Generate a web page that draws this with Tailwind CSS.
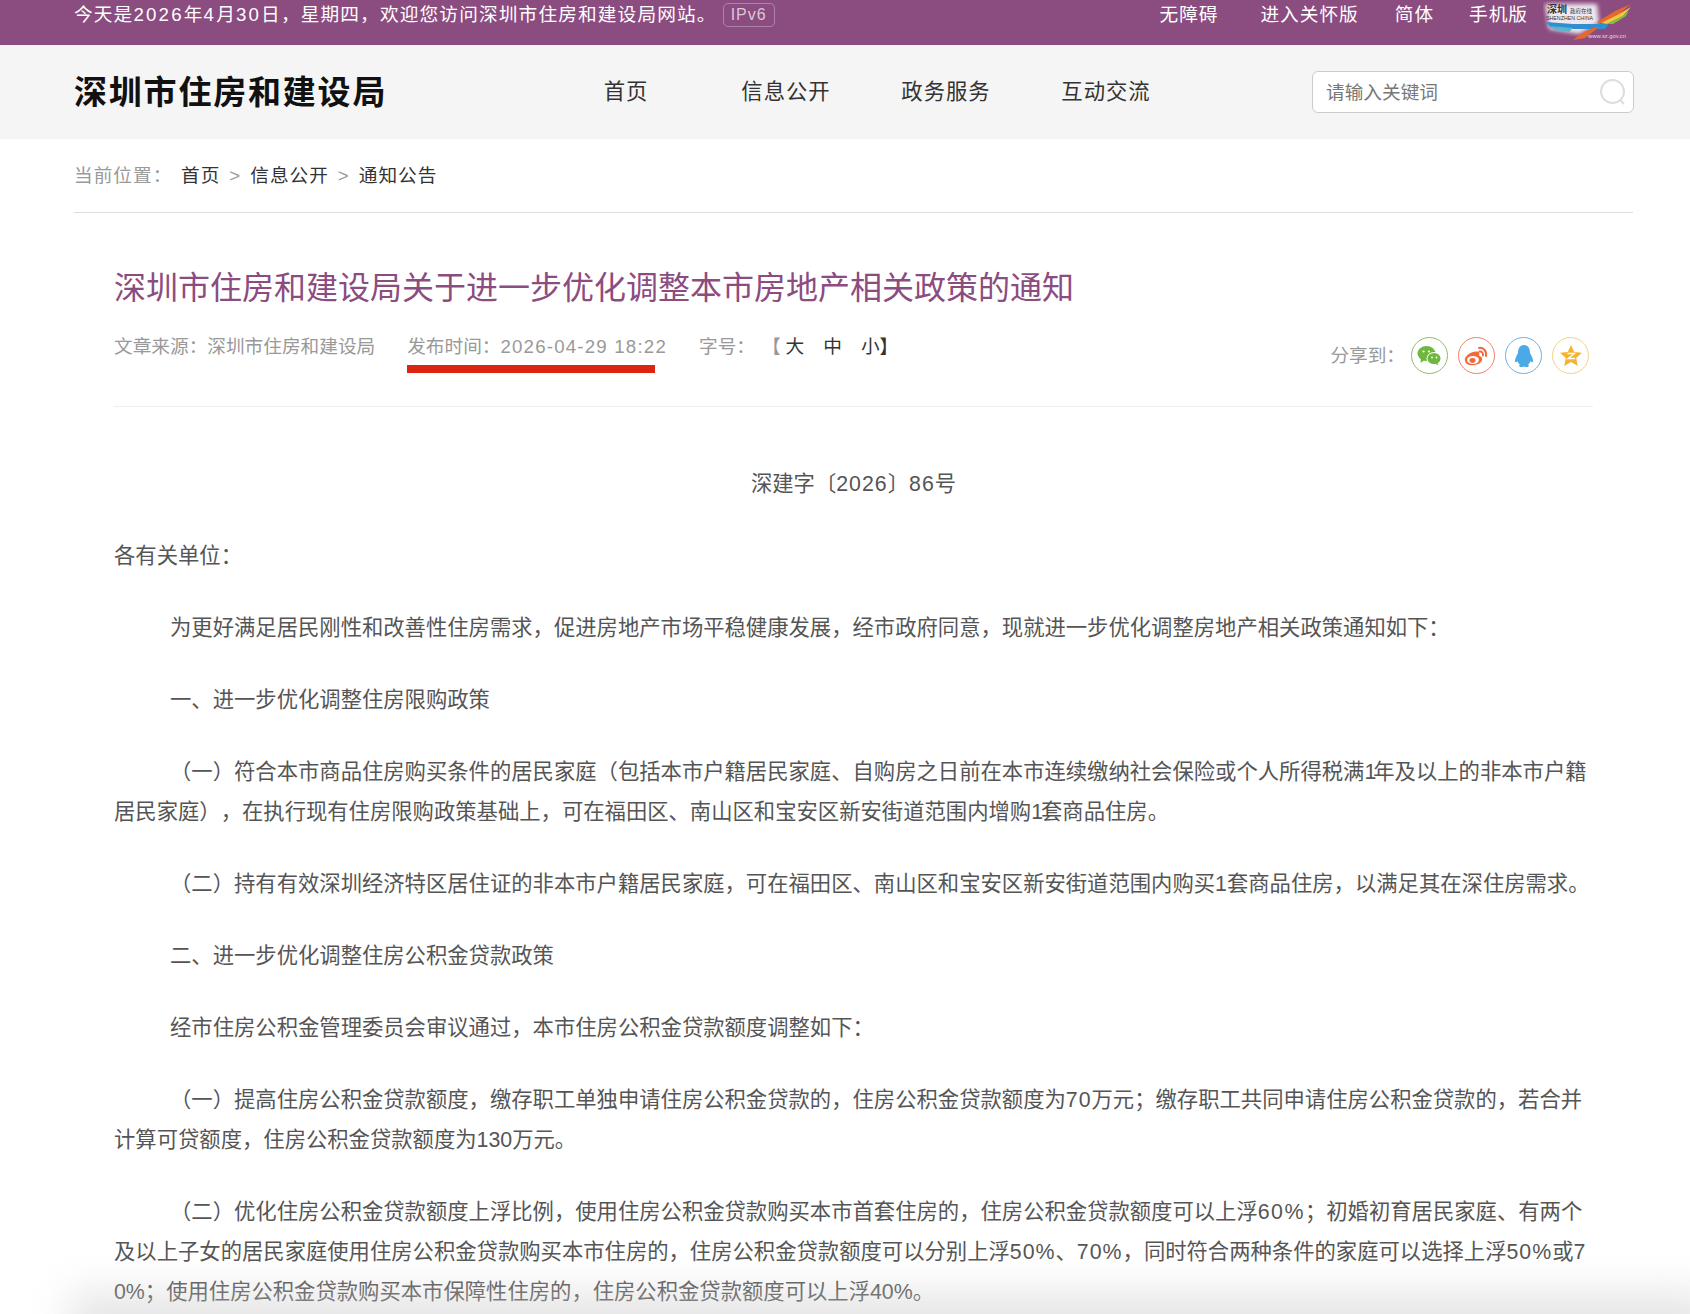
<!DOCTYPE html>
<html lang="zh-CN">
  <head>
    <meta charset="UTF-8" />
    <title>深圳市住房和建设局关于进一步优化调整本市房地产相关政策的通知</title>
    <script src="https://cdn.jsdelivr.net/npm/@tailwindcss/browser@4"></script>
  </head>
  <body class="relative h-[1314px] overflow-hidden bg-white font-['Liberation_Sans','Noto_Sans_CJK_SC',sans-serif] text-[#555] [text-spacing-trim:space-all]">

    <!-- top bar -->
    <div class="flex h-[45px] items-start justify-between bg-[#8b4c7f] pl-[74px] pr-[57px] text-[18.67px] leading-[30px] tracking-[1px] text-white">
      <div class="flex items-start">
        <span class="tracking-[1.15px]">今天是<span class="tracking-[2.2px]">2026</span>年<span class="tracking-[2.2px]">4</span>月<span class="tracking-[2.2px]">30</span>日，星期四，欢迎您访问深圳市住房和建设局网站。</span>
        <span class="ml-[6px] mt-[3px] flex h-[24px] w-[52px] items-center justify-center rounded-[5px] border border-white/30 text-[16px] tracking-[1px] text-white/70">IPv6</span>
      </div>
      <div class="flex items-start">
        <a>无障碍</a>
        <a class="ml-[42px]">进入关怀版</a>
        <a class="ml-[36px]">简体</a>
        <a class="ml-[35px]">手机版</a>
        <svg class="ml-[15px] mt-[1px] tracking-normal" width="90" height="40" viewBox="0 0 90 40">
          <defs>
            <filter id="glow"><feGaussianBlur stdDeviation="2" /></filter>
          </defs>
          <path d="M2 3 L54 3 L56 22 L36 33 L6 28 Z" fill="#eee8ee" filter="url(#glow)" />
          <polygon points="88,3 72,10 54,21 58,22 76,13" fill="#e8672c" />
          <polygon points="88,6 76,13 58,22 64,23 80,15" fill="#f2c83a" />
          <polygon points="86,9 80,15 64,23 70,23 83,15" fill="#7cc242" />
          <polygon points="3,21 30,23 66,23 62,28 30,28 8,27" fill="#2f8fd0" />
          <polygon points="6,25 30,27 26,31 12,29" fill="#57b6c9" />
          <polygon points="56,26 42,37 30,39 38,33 50,27" fill="#e8672c" />
          <text x="4" y="12" font-size="10" font-weight="700" font-family="Noto Sans CJK SC" fill="#333">深圳</text>
          <text x="27" y="12" font-size="5.500" font-family="Noto Sans CJK SC" fill="#333">政府在线</text>
          <text x="3" y="19" font-size="6" textLength="47" lengthAdjust="spacingAndGlyphs" font-family="Liberation Sans" fill="#333">SHENZHEN CHINA</text>
          <text x="45" y="37" font-size="5.500" textLength="38" lengthAdjust="spacingAndGlyphs" font-family="Liberation Sans" fill="#e4dce4">www.sz.gov.cn</text>
        </svg>
      </div>
    </div>

    <!-- nav -->
    <div class="flex h-[94px] items-center bg-[#f5f5f5] pl-[74px] pr-[56px]">
      <div class="w-[472px] text-[33px] font-bold leading-none tracking-[1.8px] text-[#111]">深圳市住房和建设局</div>
      <nav class="mt-[2px] flex text-[21.33px] tracking-[1px] text-[#333]">
        <a class="w-[160px] text-center">首页</a>
        <a class="w-[160px] text-center">信息公开</a>
        <a class="w-[160px] text-center">政务服务</a>
        <a class="w-[160px] text-center">互动交流</a>
      </nav>
      <div class="ml-auto flex h-[42px] w-[322px] items-center justify-between rounded-[6px] border border-[#ccc] bg-white pl-[13px] pr-[6px] text-[18.67px] text-[#777]">
        <span class="pt-[2px]">请输入关键词</span>
        <svg width="28" height="28" viewBox="0 0 28 28" fill="none" stroke="#ddd" stroke-width="2">
          <circle cx="13.5" cy="13.5" r="11.5" />
          <path d="M21 22 L25 26" />
        </svg>
      </div>
    </div>

    <!-- breadcrumb -->
    <div class="mr-[57px] ml-[74px] flex h-[74px] items-center border-b border-[#ddd] text-[18.67px] tracking-[1px] text-[#333]">
      <span class="w-[107px] text-[#999]">当前位置：</span>
      <a>首页</a>
      <span class="mx-[9px] text-[#999]">&gt;</span>
      <a>信息公开</a>
      <span class="mx-[9px] text-[#999]">&gt;</span>
      <a>通知公告</a>
    </div>

    <!-- article -->
    <div class="ml-[114px] w-[1479px]">
      <h1 class="mt-[51px] text-[32px] leading-[48px] text-[#8b4c7f]">深圳市住房和建设局关于进一步优化调整本市房地产相关政策的通知</h1>

      <div class="mt-[17px] flex h-[78px] items-start border-b border-[#eee] text-[18.67px] leading-[36px] text-[#999]">
        <span>文章来源：深圳市住房和建设局</span>
        <span class="relative ml-[32px] block h-[45px]">发布时间：<span class="tracking-[1.2px]">2026-04-29 18:22</span>
          <i class="absolute left-0 top-[36px] h-[8px] w-[248px] bg-[#dc2410]"></i>
        </span>
        <span class="ml-[32px]">字号：</span>
        <span class="ml-[12px] text-[#333]"><span class="-ml-[5px] mr-[5px] text-[#999]">【</span>大<span class="ml-[19px]">中</span><span class="ml-[19px]">小</span><span>】</span></span>
        <div class="ml-auto mr-[4px] mt-[8px] flex items-center">
          <span class="mr-[6px]">分享到：</span>
          <span class="flex h-[37px] w-[37px] items-center justify-center rounded-full border border-[#8cc06c]">
            <svg width="25" height="22" viewBox="0 0 25 22" fill="#6fb83f">
              <ellipse cx="9.5" cy="8.5" rx="9" ry="7.5" />
              <path d="M4 13 L3.5 18 L9 14 Z" />
              <ellipse cx="17" cy="13.5" rx="7.5" ry="6.5" fill="#fff" />
              <ellipse cx="17" cy="13.5" rx="6.5" ry="5.5" />
              <path d="M20 17 L21.5 20.5 L17 18 Z" />
              <circle cx="6.5" cy="6.5" r="1.1" fill="#fff" />
              <circle cx="12" cy="6.5" r="1.1" fill="#fff" />
              <circle cx="15" cy="12.5" r="0.9" fill="#fff" />
              <circle cx="19.5" cy="12.5" r="0.9" fill="#fff" />
            </svg>
          </span>
          <span class="ml-[10px] flex h-[37px] w-[37px] items-center justify-center rounded-full border border-[#ee8468]">
            <svg width="27" height="24" viewBox="0 0 27 24">
              <path d="M10 8 C4 10 1 14 2 17 C3 21 8 22 12 21 C17 20 20 17 19 14 C18.500 12.500 17 12 16 11.500 C17 9 16 7 13 7.500 C12 7.700 11 8 10 8 Z" fill="#f06a3c" />
              <ellipse cx="10" cy="16" rx="6" ry="4" fill="#fff" />
              <ellipse cx="9.500" cy="16.500" rx="3" ry="2.400" fill="#f06a3c" />
              <path d="M16 4 C20 3 24 7 23 12 M16.500 7.500 C18.500 7 20.500 9 20 11.500" fill="none" stroke="#f06a3c" stroke-width="2" stroke-linecap="round" />
            </svg>
          </span>
          <span class="ml-[10px] flex h-[37px] w-[37px] items-center justify-center rounded-full border border-[#6cb4de]">
            <svg width="20" height="24" viewBox="0 0 20 24" fill="#4aa9e6">
              <path d="M10 1 C5.500 1 4 5 4 9 C3 11 1 14 1 17 C1 19 2.500 18.500 3.500 17 C4 19 5 20 6 20.500 C4.500 21.500 5 23 8 23 C9 23 9.500 22.500 10 22.500 C10.500 22.500 11 23 12 23 C15 23 15.500 21.500 14 20.500 C15 20 16 19 16.500 17 C17.500 18.500 19 19 19 17 C19 14 17 11 16 9 C16 5 14.500 1 10 1 Z" />
            </svg>
          </span>
          <span class="ml-[10px] flex h-[37px] w-[37px] items-center justify-center rounded-full border border-[#f2d090]">
            <svg width="24" height="23" viewBox="0 0 24 23">
              <polygon points="12,1 15.200,8 23,8.800 17.200,14 18.800,22 12,18 5.200,22 6.800,14 1,8.800 8.800,8" fill="#f5b332" />
              <path d="M8.500 9.500 H15.500 L9 14.500 H16" fill="none" stroke="#fff" stroke-width="1.300" />
            </svg>
          </span>
        </div>
      </div>

      <div class="mt-[57px] text-[21.33px] leading-[40px]">
        <p class="text-center">深建字〔<span class="tracking-[1px]">2026</span>〕<span class="tracking-[1px]">86</span>号</p>
        <p class="mt-[32px]">各有关单位：</p>
        <p class="mt-[32px] indent-[56px] whitespace-nowrap">为更好满足居民刚性和改善性住房需求，促进房地产市场平稳健康发展，经市政府同意，现就进一步优化调整房地产相关政策通知如下：</p>
        <p class="mt-[32px] indent-[56px]">一、进一步优化调整住房限购政策</p>
        <p class="mt-[32px] indent-[56px] whitespace-nowrap">（一）符合本市商品住房购买条件的居民家庭（包括本市户籍居民家庭、自购房之日前在本市连续缴纳社会保险或个人所得税满<span class="tracking-[-3px]">1</span>年及以上的非本市户籍<br />居民家庭），在执行现有住房限购政策基础上，可在福田区、南山区和宝安区新安街道范围内增购<span class="tracking-[-2px]">1</span>套商品住房。</p>
        <p class="mt-[32px] indent-[56px] whitespace-nowrap">（二）持有有效深圳经济特区居住证的非本市户籍居民家庭，可在福田区、南山区和宝安区新安街道范围内购买1套商品住房，以满足其在深住房需求。</p>
        <p class="mt-[32px] indent-[56px]">二、进一步优化调整住房公积金贷款政策</p>
        <p class="mt-[32px] indent-[56px]">经市住房公积金管理委员会审议通过，本市住房公积金贷款额度调整如下：</p>
        <p class="mt-[32px] indent-[56px] whitespace-nowrap">（一）提高住房公积金贷款额度，缴存职工单独申请住房公积金贷款的，住房公积金贷款额度为<span class="tracking-[1px]">70</span>万元；缴存职工共同申请住房公积金贷款的，若合并<br />计算可贷额度，住房公积金贷款额度为130万元。</p>
        <p class="mt-[32px] indent-[56px] whitespace-nowrap">（二）优化住房公积金贷款额度上浮比例，使用住房公积金贷款购买本市首套住房的，住房公积金贷款额度可以上浮<span class="tracking-[1.5px]">60%</span>；初婚初育居民家庭、有两个<br />及以上子女的居民家庭使用住房公积金贷款购买本市住房的，住房公积金贷款额度可以分别上浮<span class="tracking-[1px]">50%</span>、<span class="tracking-[1px]">70%</span>，同时符合两种条件的家庭可以选择上浮<span class="tracking-[1px]">50%</span>或7<br />0%；使用住房公积金贷款购买本市保障性住房的，住房公积金贷款额度可以上浮40%。</p>
      </div>
    </div>

    <!-- soft shadow at the bottom edge -->
    <div class="pointer-events-none absolute bottom-[-48px] left-[70px] right-[-20px] h-[70px] bg-[#ccc] opacity-50 blur-[20px]"></div>
  </body>
</html>
